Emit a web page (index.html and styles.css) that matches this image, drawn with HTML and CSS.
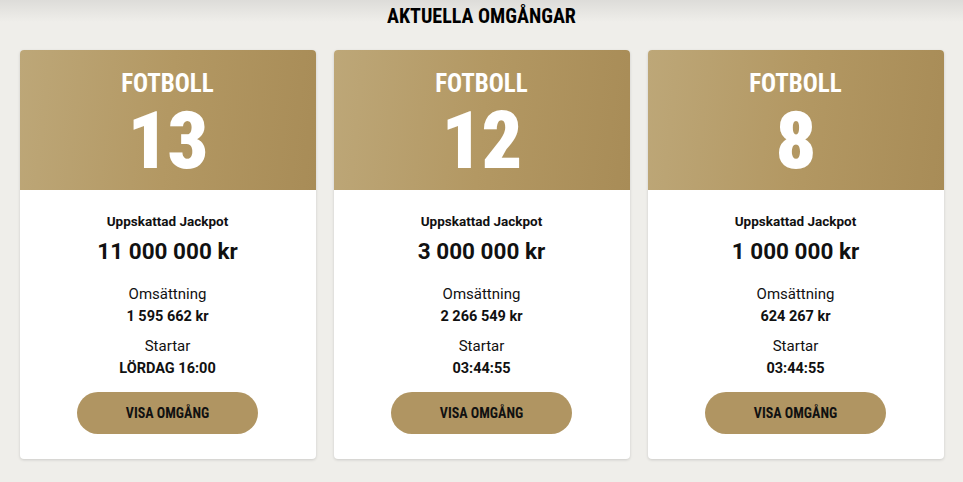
FILE: index.html
```html
<!DOCTYPE html>
<html lang="sv">

<head>
    <meta charset="UTF-8">
    <meta name="viewport" content="width=device-width, initial-scale=1.0">
    <title>Aktuella omgångar</title>
    <link rel="stylesheet" href="styles.css">
</head>

<body>
    <section class="rounds">
        <h2 class="rounds-title">AKTUELLA OMGÅNGAR</h2>
        <div class="card-list">
            <div class="card">
                <div class="card-head">
                    <div class="game">FOTBOLL</div>
                    <div class="game-count">13</div>
                </div>
                <div class="card-body">
                    <div class="jackpot-label">Uppskattad Jackpot</div>
                    <div class="jackpot">11 000 000 kr</div>
                    <div class="label">Omsättning</div>
                    <div class="value">1 595 662 kr</div>
                    <div class="label">Startar</div>
                    <div class="value">LÖRDAG 16:00</div>
                    <button class="btn">VISA OMGÅNG</button>
                </div>
            </div>
            <div class="card">
                <div class="card-head">
                    <div class="game">FOTBOLL</div>
                    <div class="game-count">12</div>
                </div>
                <div class="card-body">
                    <div class="jackpot-label">Uppskattad Jackpot</div>
                    <div class="jackpot">3 000 000 kr</div>
                    <div class="label">Omsättning</div>
                    <div class="value">2 266 549 kr</div>
                    <div class="label">Startar</div>
                    <div class="value">03:44:55</div>
                    <button class="btn">VISA OMGÅNG</button>
                </div>
            </div>
            <div class="card">
                <div class="card-head">
                    <div class="game">FOTBOLL</div>
                    <div class="game-count">8</div>
                </div>
                <div class="card-body">
                    <div class="jackpot-label">Uppskattad Jackpot</div>
                    <div class="jackpot">1 000 000 kr</div>
                    <div class="label">Omsättning</div>
                    <div class="value">624 267 kr</div>
                    <div class="label">Startar</div>
                    <div class="value">03:44:55</div>
                    <button class="btn">VISA OMGÅNG</button>
                </div>
            </div>
        </div>
    </section>
</body>

</html>
```

FILE: styles.css
```css
body {
    margin: 0;
    height: 482px;
    background: linear-gradient(#dddcd9 0, #efeeea 22px, #efeeea 100%);
    font-family: Roboto, "Liberation Sans", sans-serif;
    color: #111;
}

.rounds {
    padding-top: 5px;
}

.rounds-title {
    margin: 0;
    text-align: center;
    font-family: "Roboto Condensed", Roboto, sans-serif;
    font-stretch: condensed;
    font-size: 20px;
    line-height: 22px;
    font-weight: 700;
    color: #000;
}

.card-list {
    display: flex;
    justify-content: center;
    gap: 18px;
    margin-top: 23px;
}

.card {
    width: 296px;
    height: 409px;
    background: #fff;
    border-radius: 4px;
    overflow: hidden;
    box-shadow: 0 1px 3px rgba(0, 0, 0, 0.15);
}

.card-head {
    height: 140px;
    background: linear-gradient(96deg, #bda778 0%, #b39863 50%, #a88c57 100%);
    color: #fff;
    text-align: center;
    font-family: "Roboto Condensed", Roboto, sans-serif;
    font-stretch: condensed;
    font-weight: 700;
}

.game {
    padding-top: 24px;
    font-size: 25px;
    line-height: 20px;
}

.game-count {
    font-family: Roboto, "Liberation Sans", sans-serif;
    font-size: 80px;
    line-height: 94px;
    font-weight: 900;
    letter-spacing: -1px;
}

.card-body {
    display: flex;
    flex-direction: column;
    align-items: center;
    padding-top: 23px;
}

.jackpot-label {
    font-size: 13.5px;
    line-height: 16px;
    font-weight: 700;
}

.jackpot {
    margin-top: 8px;
    font-size: 22.5px;
    line-height: 28px;
    font-weight: 700;
}

.label {
    margin-top: 10px;
    font-size: 15px;
    line-height: 20px;
}

.jackpot + .label {
    margin-top: 19px;
}

.value {
    margin-top: 4px;
    font-size: 14.5px;
    line-height: 18px;
    font-weight: 700;
}

.btn {
    margin-top: 14px;
    width: 181px;
    height: 42px;
    border: none;
    border-radius: 21px;
    background: #b09562;
    color: #111;
    font-family: "Roboto Condensed", Roboto, sans-serif;
    font-stretch: condensed;
    font-size: 14px;
    font-weight: 700;
    cursor: pointer;
}
```
